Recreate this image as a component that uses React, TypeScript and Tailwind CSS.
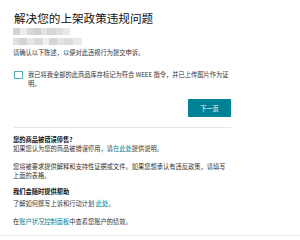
import React from 'react';

const blurRowA = [
  { w: 7, c: '#d4d4d4' },
  { w: 7, c: '#ececec' },
  { w: 6, c: '#d9d9d9' },
  { w: 8, c: '#cfcfcf' },
  { w: 6, c: '#e2e2e2' },
  { w: 9, c: '#d6d6d6' },
  { w: 7, c: '#dedede' },
  { w: 7, c: '#e8e8e8' },
];

const blurRowB = [
  { w: 6, c: '#e0e0e0' },
  { w: 8, c: '#d3d3d3' },
  { w: 7, c: '#e6e6e6' },
  { w: 9, c: '#dadada' },
  { w: 6, c: '#efefef' },
  { w: 8, c: '#d5d5d5' },
  { w: 7, c: '#e3e3e3' },
  { w: 9, c: '#dcdcdc' },
  { w: 9, c: '#e9e9e9' },
];

const Link: React.FC<{ children: React.ReactNode }> = ({ children }) => (
  <span className="text-[#008296]">{children}</span>
);

export default function App() {
  return (
    <div
      className="w-[300px] h-[240px] bg-white overflow-hidden flex flex-col"
      style={{ fontFamily: '"Noto Sans CJK SC", "Noto Sans", sans-serif' }}
    >
      <div className="flex-1 pl-[14px] pt-[11px] w-[231px] text-[#333] text-[6.25px] leading-[9px]">
        {/* Title */}
        <h1 className="text-[11.6px] leading-[14px] text-[#111] whitespace-nowrap">
          解决您的上架政策违规问题
        </h1>

        {/* Redacted product info */}
        <div className="mt-[3px] flex h-[7px] -ml-[1px]">
          {blurRowA.map((b, i) => (
            <div key={i} style={{ width: b.w, backgroundColor: b.c }} />
          ))}
        </div>
        <div className="mt-[3px] flex h-[7px] -ml-[1px]">
          {blurRowB.map((b, i) => (
            <div key={i} style={{ width: b.w, backgroundColor: b.c }} />
          ))}
        </div>

        <p className="mt-[3px] -ml-[1px]">请确认以下陈述，以便对此违规行为提交申诉。</p>

        {/* Checkbox */}
        <div className="mt-[13px] flex items-start">
          <div className="w-[9px] h-[8px] border border-[#4fb0b8] bg-white shrink-0 mt-[1px]" />
          <p className="ml-[5px]">
            我已将我全部的此商品库存标记为符合 WEEE 指令，并已上传图片作为证
            <br />
            明。
          </p>
        </div>

        <div className="mt-[11px] flex justify-end">
          <button className="w-[43px] h-[18px] bg-[#008296] text-white text-[6.25px] leading-[9px] flex items-center justify-center rounded-[1px]">
            下一页
          </button>
        </div>

        <div className="mt-[10px] border-t border-[#e7e7e7]" />

        {/* Help sections */}
        <div className="mt-[7px] -ml-[1px]">
          <h2 className="font-bold text-[#111]">您的商品被错误停售?</h2>
          <p>
            如果您认为您的商品被错误停用，请<Link>在此处</Link>提供说明。
          </p>
          <p className="mt-[9px]">
            您将被要求提供解释和支持性证据或文件。如果您想承认有违反政策，请填写上面的表格。
          </p>
        </div>

        <div className="mt-[7px] -ml-[1px]">
          <h2 className="font-bold text-[#111]">我们会随时提供帮助</h2>
          <p className="mt-[3px]">
            了解如何撰写上诉和行动计划 <Link>此处</Link>。
          </p>
          <p className="mt-[9px]">
            在<Link>账户状况控制面板</Link>中查看您账户的绩效。
          </p>
        </div>
      </div>
      <div className="h-[5px] border-t border-[#ececec]" />
    </div>
  );
}
